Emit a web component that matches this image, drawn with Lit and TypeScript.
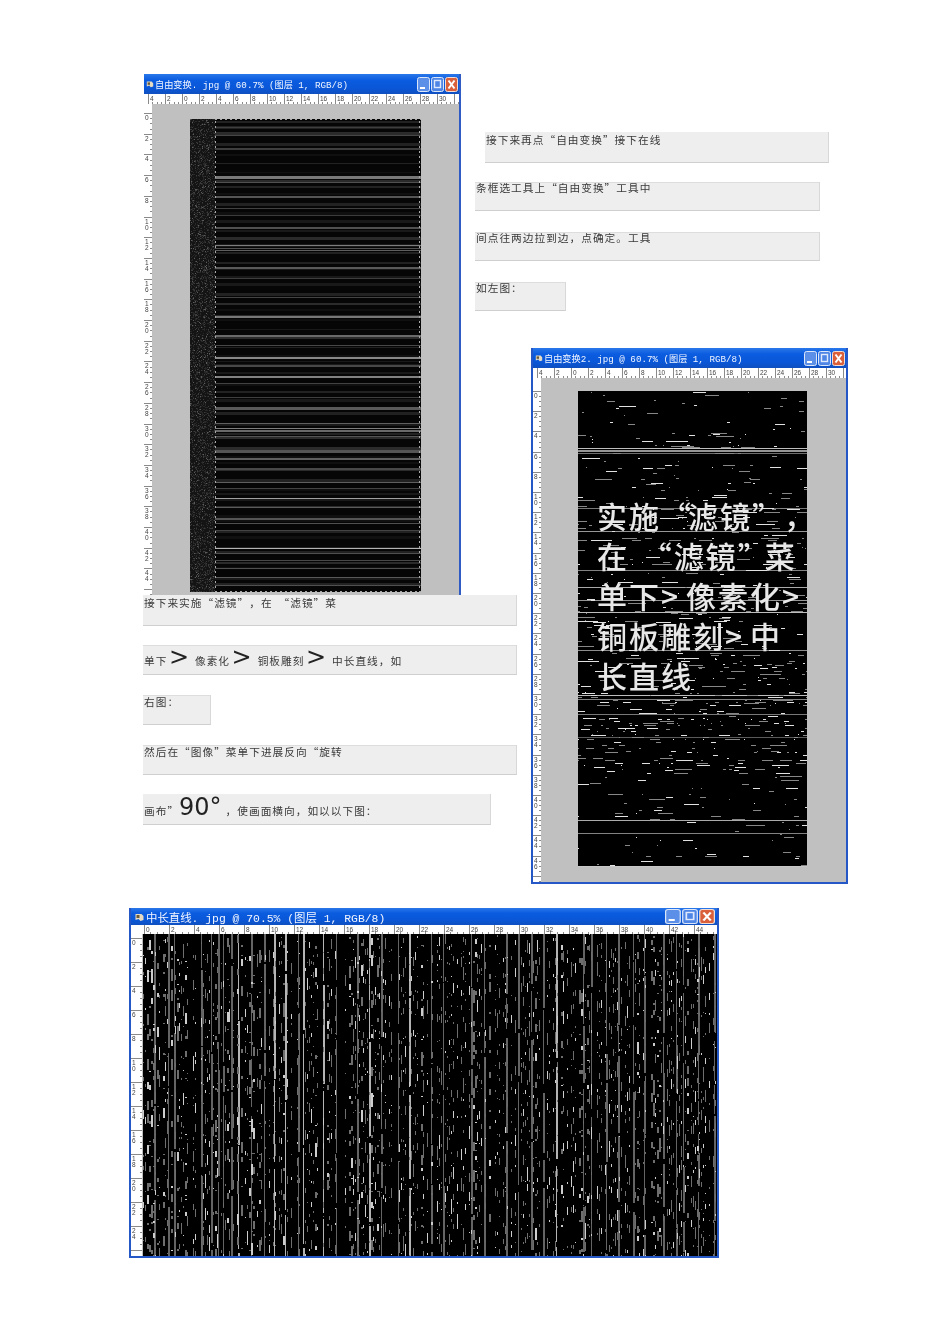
import { LitElement, html, svg, css } from "lit";
import { customElement } from "lit/decorators.js";

/* ---------- seeded noise helpers ---------- */
function rng(seed: number) {
  let s = seed >>> 0;
  return () => {
    s = (s + 0x6d2b79f5) >>> 0;
    let t = s;
    t = Math.imul(t ^ (t >>> 15), t | 1);
    t ^= t + Math.imul(t ^ (t >>> 7), t | 61);
    return ((t ^ (t >>> 14)) >>> 0) / 4294967296;
  };
}
type R = [number, number, number, number, string];
function paths(list: R[]) {
  const m = new Map<string, string[]>();
  for (const [x, y, w, h, c] of list) {
    if (!m.has(c)) m.set(c, []);
    m.get(c)!.push(`M${x} ${y}h${w}v${h}h${-w}z`);
  }
  return [...m.entries()].map(([c, d]) => svg`<path fill=${c} d=${d.join("")}></path>`);
}
const grey = (v: number) => `rgb(${v},${v},${v})`;

/* first picture: speckled strip + horizontal stripes + selection marquee */
function stripes() {
  const r = rng(7);
  const out: R[] = [];
  const W = 231, H = 473, Y0 = 119, S = 25;
  out.push([0, 0, S, H, "#141414"]);
  for (let y = 0; y < H; y++)
    for (let x = 0; x < S; x++) {
      const p = r();
      if (p < 0.34) out.push([x, y, 1, 1, grey(p < 0.025 ? 92 : p < 0.12 ? 60 : 40)]);
    }
  let y = 2;
  while (y < H) {
    const h = 1 + Math.floor(r() * 3);
    const v = 16 + Math.floor(r() * 4) * 9;
    out.push([S, y, W - S, h, grey(v)]);
    y += h + 2 + Math.floor(r() * 7);
  }
  const bright: [number, number, number][] = [
    [127, 1, 62], [135, 1, 70], [148, 2, 62], [176, 3, 120], [182, 1, 80], [196, 2, 85], [208, 1, 65],
    [215, 1, 60], [227, 2, 80], [245, 1, 125], [248, 1, 80], [250, 1, 95], [267, 2, 90], [278, 1, 62],
    [297, 1, 68], [316, 2, 120], [335, 2, 105], [345, 1, 72], [357, 2, 135], [365, 2, 72], [376, 2, 130],
    [383, 1, 66], [397, 1, 62], [407, 3, 90], [423, 1, 95], [428, 1, 125], [430, 2, 105], [436, 1, 85],
    [450, 3, 85], [458, 2, 95], [468, 2, 72], [482, 1, 95], [488, 1, 68], [498, 1, 160], [507, 1, 90],
    [518, 2, 85], [523, 1, 80], [530, 1, 68], [548, 1, 180], [553, 1, 80], [560, 1, 72], [568, 1, 80],
    [577, 1, 90], [585, 1, 80],
  ];
  for (const [a, h, v] of bright) out.push([S, a - Y0, W - S, h, grey(v)]);
  const dot = "#a8a8a8";
  for (let i = 2; i < H; i += 5) {
    out.push([S, i, 1, 2, dot]);
    out.push([W - 2, i, 1, 2, dot]);
  }
  for (let i = S; i < W; i += 5) {
    out.push([i, 0, 2, 1, dot]);
    out.push([i, H - 1, 2, 1, dot]);
  }
  return paths(out);
}

/* second picture: black with broken horizontal dashes */
function dashes() {
  const r = rng(21);
  const out: R[] = [];
  const W = 229, H = 476, Y0 = 391;
  const full: [number, number, number][] = [
    [448, 1, 190], [450, 2, 150], [453, 1, 110], [508, 1, 120], [531, 1, 150], [570, 1, 130], [587, 1, 170],
    [600, 1, 150], [612, 1, 190], [650, 1, 140], [695, 1, 190], [699, 1, 130], [714, 1, 120], [737, 1, 90],
    [820, 1, 170], [833, 1, 130], [866, 1, 200],
  ];
  for (const [a, h, v] of full) out.push([0, a - Y0, W, h, grey(v)]);
  for (let y = 0; y < H; y += 1 + Math.floor(r() * 3)) {
    const abs = y + Y0;
    const d = abs < 450 ? 0.06 : abs < 500 ? 0.1 : abs < 700 ? 0.15 : abs < 770 ? 0.2 : 0.09;
    let x = 0;
    while (x < W) {
      if (r() < d) {
        const w = 1 + Math.floor(r() * r() * 24);
        out.push([x, y, Math.min(w, W - x), 1, grey(r() < 0.4 ? 225 : 135)]);
        x += w;
      }
      x += 3 + Math.floor(r() * 12);
    }
  }
  return paths(out);
}

/* third picture: black with broken vertical streaks */
function streaks() {
  const r = rng(33);
  const out: R[] = [];
  const W = 574, H = 322, X0 = 142;
  const major = [153, 167, 173, 200, 210, 217, 222, 230, 237, 250, 263, 273, 284, 297, 302, 322, 335, 356, 368, 380, 397, 408,
    430, 442, 470, 483, 505, 517, 530, 542, 555, 582, 590, 605, 617, 632, 643, 662, 675, 682, 697, 713];
  for (const m of major) {
    const lit = r() < 0.2;
    let y = 0;
    while (y < H) {
      const h = 20 + Math.floor(r() * 110);
      out.push([m - X0, y, 1 + Math.floor(r() * 2), Math.min(h, H - y), grey(lit ? 180 : 100)]);
      y += h + Math.floor(r() * 10);
    }
  }
  for (let x = 0; x < W; x += 2) {
    let y = Math.floor(r() * 30);
    const dense = r() < 0.7;
    const wide = r() < 0.25 ? 2 : 1;
    while (y < H) {
      const h = 1 + Math.floor(r() * r() * 16);
      if (dense) out.push([x, y, wide, Math.min(h, H - y), grey(r() < 0.25 ? 205 : 110)]);
      y += h + 3 + Math.floor(r() * 34);
    }
  }
  return paths(out);
}

const pic1 = stripes();
const pic2 = dashes();
const pic3 = streaks();

/* ---------- data ---------- */
const notes = [
  { x: 485, y: 132, w: 344, h: 31, c: "", t: html`接下来再点“自由变换”接下在线` },
  { x: 475, y: 182, w: 345, h: 29, c: "edge up2", t: html`条框选工具上“自由变换”工具中` },
  { x: 475, y: 232, w: 345, h: 29, c: "edge up2", t: html`间点往两边拉到边，点确定。工具` },
  { x: 475, y: 282, w: 91, h: 29, c: "edge up2", t: html`如左图：` },
  { x: 143, y: 595, w: 374, h: 31, c: "", t: html`接下来实施“滤镜”，在 “滤镜”菜` },
  { x: 143, y: 645, w: 374, h: 30, c: "edge big", t: html`单下<b>&gt;</b> 像素化<b>&gt;</b> 铜板雕刻<b>&gt;</b> 中长直线，如` },
  { x: 143, y: 695, w: 68, h: 30, c: "edge up1", t: html`右图：` },
  { x: 143, y: 745, w: 374, h: 30, c: "edge up1", t: html`然后在“图像”菜单下进展反向“旋转` },
  { x: 143, y: 794, w: 348, h: 31, c: "big", t: html`画布”<b class="deg">90°</b> ，使画面横向，如以以下图：` },
];

const titleBtns = svg`
  <rect x="0.5" y="0.5" width="12" height="14" rx="2" fill="#5b8fe8" stroke="#dbe6f8"></rect>
  <rect x="3" y="10" width="5" height="2" fill="#fff"></rect>
  <rect x="14.5" y="0.5" width="12" height="14" rx="2" fill="#4f86e6" stroke="#dbe6f8"></rect>
  <rect x="17.5" y="3.5" width="6" height="7" fill="none" stroke="#dfe9fb" stroke-width="1.4"></rect>
  <rect x="28.5" y="0.5" width="12" height="14" rx="2" fill="#d9603a" stroke="#f4ddd2"></rect>
  <path d="M31.5 3.5l6 8M37.5 3.5l-6 8" stroke="#fff" stroke-width="2" fill="none"></path>`;

const psIcon = (w: number) => svg`<svg class="ps" viewBox="0 0 10 10" width=${w} height="10">
  <path d="M1 2h6l2 2v4l-3 1-2-2-3 1z" fill="#e6dcc4"></path>
  <path d="M2 3h3v3h-3z" fill="#6b5a3a"></path></svg>`;

function topRuler(w: number, start: number, step: number, labels: number[], h = 10) {
  const ticks: string[] = [];
  const nums = [];
  for (let i = 0; i * step / 4 + start < w; i++) {
    const x = Math.round(start + (i * step) / 4) + 0.5;
    ticks.push(`M${x} ${i % 4 === 0 ? 0 : h - 2}V${h}`);
    if (i % 4 === 0 && labels[i / 4] !== undefined)
      nums.push(svg`<text x=${x + 1.5} y="6.5">${labels[i / 4]}</text>`);
  }
  return svg`<svg class="rul" width=${w} height=${h}>
    <path d=${ticks.join("")} stroke="#8a8a8a" fill="none"></path>${nums}</svg>`;
}
function leftRuler(w: number, h: number, start: number, step: number, labels: number[]) {
  const ticks: string[] = [];
  const nums = [];
  for (let i = 0; i * step / 4 + start < h; i++) {
    const y = Math.round(start + (i * step) / 4) + 0.5;
    ticks.push(`M${i % 4 === 0 ? 0 : w - 2} ${y}H${w}`);
    if (i % 4 === 0 && labels[i / 4] !== undefined && y + 18 < h) {
      const s = String(labels[i / 4]);
      [...s].forEach((c, k) => nums.push(svg`<text x="1" y=${y + 6 + k * 6}>${c}</text>`));
    }
  }
  return svg`<svg class="rul" width=${w} height=${h}>
    <path d=${ticks.join("")} stroke="#8a8a8a" fill="none"></path>${nums}</svg>`;
}
const evens = (a: number, n: number) => Array.from({ length: n }, (_, i) => a + i * 2);

@customElement("app-root")
export class AppRoot extends LitElement {
  static styles = css`
    :host { display: block; }
    .page { position: relative; width: 950px; height: 1344px; background: #fff; overflow: hidden; }
    .win { position: absolute; display: flex; flex-direction: column; box-sizing: border-box;
      background: #c0c0c0; filter: blur(0.6px); overflow: hidden; }
    .w1 { border-right: 2px solid #2f5cc4; }
    .w2, .w3 { border: 2px solid #2557c6; border-top: 0; }
    .bar { flex: none; display: flex; align-items: center; gap: 1px; box-sizing: border-box;
      background: linear-gradient(180deg, #2a78ea 0%, #0b5ce0 30%, #0a57d8 70%, #0f4fc0 100%);
      color: #f2f6ff; white-space: nowrap; font-family: "Liberation Mono", "Noto Sans CJK SC", monospace; }
    .bar .txt { flex: 1; overflow: hidden; }
    .bar svg { flex: none; display: block; }
    .b1 { height: 20px; padding: 0 1px 0 2px; font-size: 9.2px; }
    .b3 { height: 17px; padding: 0 2px 0 3px; font-size: 11.4px; }
    .rul { display: block; flex: none; background: #fff; }
    .rul text { font: 6.5px "Liberation Sans", sans-serif; fill: #444; }
    .row { flex: 1; display: flex; min-height: 0; }
    .view { flex: 1; display: flex; justify-content: center; align-items: flex-start; min-width: 0; }
    .view.pad { padding-right: 2px; }
    .shot { position: relative; flex: none; display: block; background: #060606; }
    .shot svg { display: block; }
    .s1 { width: 231px; height: 473px; margin-top: 15px; }
    .s2 { width: 229px; height: 476px; margin-top: 13px; background: #000; }
    .s3 { width: 574px; height: 322px; background: #000; }
    .over { position: absolute; left: 19px; top: 104px; color: #e8e8e8; font: 500 30px/40px "Noto Sans CJK SC", sans-serif;
      letter-spacing: 2px; white-space: pre; text-spacing-trim: space-all; }
    .over .gt { margin-right: 6px; }
    .over .tight { letter-spacing: -3px; }
    .over .wide { letter-spacing: 6px; }
    .note { position: absolute; box-sizing: border-box; background: #eeeeee; border-bottom: 1px solid #cfcfcf;
      border-right: 1px solid #d8d8d8; color: #3a3a3a; font: 400 10.7px/14px "Noto Sans CJK SC", sans-serif;
      letter-spacing: 1px; word-spacing: 2.6px; padding: 1px 0 0 1px; white-space: pre; filter: blur(0.25px);
      text-spacing-trim: space-all; }
    .note.edge { box-shadow: inset 0 1px 0 #dddddd; }
    .note.up1 { padding-top: 0; }
    .note.up2 { padding-top: 0; line-height: 12px; }
    .note.big { display: flex; align-items: flex-end; padding: 0 0 6px 1px; }
    .note b { font: 400 24px/14px "DejaVu Sans", sans-serif; color: #222; letter-spacing: 0; margin-left: 1.5px; }
    .note b.deg { margin-left: 0; margin-right: -2px; }
    .note.big > span { display: block; }
  `;

  render() {
    return html`<div class="page">
      <div class="win w1" style="left:144px;top:74px;width:317px;height:521px">
        <div class="bar b1">${psIcon(8)}<span class="txt">自由变换. jpg @ 60.7% (图层 1, RGB/8)</span>
          <svg width="41" height="15" viewBox="0 0 41 15">${titleBtns}</svg></div>
        ${topRuler(315, 4, 17, [4, 2, 0, 2, 4, 6, 8, 10, 12, 14, 16, 18, 20, 22, 24, 26, 28, 30])}
        <div class="row">
          ${leftRuler(8, 491, 9, 20.7, evens(0, 26))}
          <div class="view"><div class="shot s1"><svg width="231" height="473">${pic1}</svg></div></div>
        </div>
      </div>

      <div class="win w2" style="left:531px;top:348px;width:317px;height:536px">
        <div class="bar b1">${psIcon(8)}<span class="txt">自由变换2. jpg @ 60.7% (图层 1, RGB/8)</span>
          <svg width="41" height="15" viewBox="0 0 41 15">${titleBtns}</svg></div>
        ${topRuler(313, 4, 17, [4, 2, 0, 2, 4, 6, 8, 10, 12, 14, 16, 18, 20, 22, 24, 26, 28, 30])}
        <div class="row">
          ${leftRuler(8, 504, 13, 20.2, evens(0, 25))}
          <div class="view pad"><div class="shot s2">
            <svg width="229" height="476">${pic2}</svg>
            <div class="over">实施<span class="tight">“</span>滤镜”，
在<span class="wide"> </span>“滤镜<span class="tight">”</span>菜
单下<span class="gt">&gt;</span>像素化<span class="gt">&gt;</span>
铜板雕刻<span class="gt">&gt;</span>中
长直线</div>
          </div></div>
        </div>
      </div>

      <div class="win w3" style="left:129px;top:908px;width:590px;height:350px">
        <div class="bar b3">${psIcon(11)}<span class="txt">中长直线. jpg @ 70.5% (图层 1, RGB/8)</span>
          <svg width="50" height="15" viewBox="0 0 41 15" preserveAspectRatio="none">${titleBtns}</svg></div>
        ${topRuler(586, 13, 25, evens(0, 23), 9)}
        <div class="row">
          ${leftRuler(11, 322, 4, 24, evens(0, 14))}
          <div class="view"><div class="shot s3"><svg width="574" height="322">${pic3}</svg></div></div>
        </div>
      </div>

      ${notes.map(
        (n) => html`<div class="note ${n.c}" style="left:${n.x}px;top:${n.y}px;width:${n.w}px;height:${n.h}px"><span>${n.t}</span></div>`
      )}
    </div>`;
  }
}
